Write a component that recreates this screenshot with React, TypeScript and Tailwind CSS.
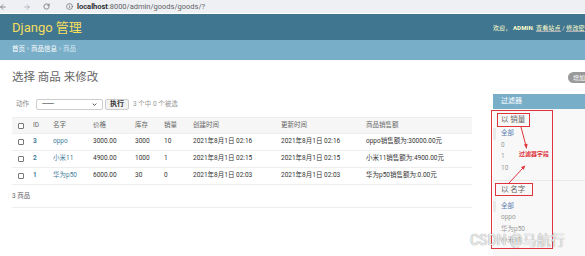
import { ArrowLeft, ArrowRight, Info, RotateCw } from "lucide-react";

const rows = [
  { id: 3, name: "oppo", price: "3000.00", stock: "3000", sales: "10", created: "2021年8月1日 02:16", updated: "2021年8月1日 02:16", total: "oppo销售额为:30000.00元" },
  { id: 2, name: "小米11", price: "4900.00", stock: "1000", sales: "1", created: "2021年8月1日 02:15", updated: "2021年8月1日 02:15", total: "小米11销售额为:4900.00元" },
  { id: 1, name: "华为p50", price: "6000.00", stock: "30", sales: "0", created: "2021年8月1日 02:03", updated: "2021年8月1日 02:03", total: "华为p50销售额为:0.00元" },
];

const cols = "grid grid-cols-[21px_20px_40px_42px_29px_29px_88px_85px_106px] items-center";

function Checkbox() {
  return <span className="ml-[6px] block h-[6px] w-[6px] rounded-[1px] border border-[#777] bg-white" />;
}

export default function App() {
  return (
    <div className="relative flex h-[256px] w-[585px] flex-col overflow-hidden bg-white font-['Roboto','Noto_Sans_CJK_SC',sans-serif] text-[#333]">
      {/* browser chrome */}
      <div className="flex h-[14px] shrink-0 items-center gap-[8px] border-b border-white bg-[#eef0f3] text-[#5f6368]">
        <ArrowLeft className="-ml-[1px] h-[8px] w-[8px]" strokeWidth={2} />
        <ArrowRight className="ml-[8px] h-[8px] w-[8px] text-[#9aa0a6]" strokeWidth={2} />
        <RotateCw className="ml-[4px] h-[7px] w-[7px]" strokeWidth={2.4} />
        <div className="ml-[8px] flex items-center gap-[4px]">
          <Info className="h-[7px] w-[7px]" strokeWidth={2.2} />
          <span className="text-[7.5px] leading-none">
            <span className="font-semibold text-[#202124]">localhost</span>:8000/admin/goods/goods/?
          </span>
        </div>
      </div>

      {/* header */}
      <div className="flex h-[26px] shrink-0 items-center justify-between bg-[#417690] pl-[12px]">
        <span className="text-[13px] leading-none text-[#f5dd5d]">Django 管理</span>
        <div className="w-[92px] overflow-hidden whitespace-nowrap text-[6px] tracking-[0.02em] text-[#ffc]">
          欢迎， <span className="font-bold">ADMIN</span>. <span className="border-b border-[#aab]">查看站点</span> / <span className="border-b border-[#aab]">修改密码</span> / 注销
        </div>
      </div>

      {/* breadcrumbs */}
      <div className="flex h-[20px] shrink-0 items-center bg-[#79aec8] pl-[12px] text-[6.5px] text-white">
        <span>首页</span>
        <span className="mx-[2px] text-[#e4f0f6]">›</span>
        <span>商品信息</span>
        <span className="mx-[2px] text-[#e4f0f6]">›</span>
        <span className="text-[#d8eaf3]">商品</span>
      </div>

      <div className="flex flex-1">
        {/* main */}
        <div className="w-[472px] pl-[12px]">
          <h1 className="pt-[10px] text-[11.5px] leading-[14px] text-[#666]">选择 商品 来修改</h1>

          <div className="mt-[15px] flex h-[11px] items-center text-[6.5px]">
            <span className="ml-[4px] text-[#888]">动作</span>
            <div className="ml-[7px] flex h-[11px] w-[67px] items-center justify-between rounded-[2px] border border-[#ccc] bg-white px-[5px]">
              <span className="tracking-[-0.5px] text-[#333]">---------</span>
              <svg viewBox="0 0 8 5" className="h-[3px] w-[5px]">
                <path d="M1 1l3 3 3-3" fill="none" stroke="#333" strokeWidth="1.4" />
              </svg>
            </div>
            <div className="ml-[2px] flex h-[11px] items-center rounded-[2px] border border-[#ccc] bg-[#f3f3f3] px-[4px] text-[7px] font-bold text-[#333]">
              执行
            </div>
            <span className="ml-[4px] text-[#999]">3 个中 0 个被选</span>
          </div>

          <div className="mt-[7px] text-[6.5px]">
            <div className={`${cols} h-[17px] border-y border-[#eee] bg-[#f6f6f6] text-[#666]`}>
              <Checkbox />
              <span>ID</span>
              <span>名字</span>
              <span>价格</span>
              <span>库存</span>
              <span>销量</span>
              <span>创建时间</span>
              <span>更新时间</span>
              <span>商品销售额</span>
            </div>
            {rows.map((r) => (
              <div key={r.id} className={`${cols} h-[17px] border-b border-[#eee]`}>
                <Checkbox />
                <span className="font-bold text-[#447e9b]">{r.id}</span>
                <span className="text-[#447e9b]">{r.name}</span>
                <span>{r.price}</span>
                <span>{r.stock}</span>
                <span>{r.sales}</span>
                <span className="whitespace-nowrap">{r.created}</span>
                <span className="whitespace-nowrap">{r.updated}</span>
                <span className="whitespace-nowrap">{r.total}</span>
              </div>
            ))}
          </div>

          <div className="border-b border-[#eee] py-[6px] text-[6.5px] leading-[10px] text-[#666]">3 商品</div>
        </div>

        {/* right column */}
        <div className="ml-[21px] flex w-[92px] flex-col">
          <div className="ml-[75px] mt-[12px] flex h-[11px] w-[60px] shrink-0 items-center rounded-full bg-[#999] pl-[5px] text-[6px] text-white">
            增加 商品 +
          </div>
          <div className="mt-[11px] flex flex-1 flex-col bg-[#f8f8f8]">
            <div className="flex h-[15px] items-center bg-[#79aec8] pl-[8px] text-[7px] text-white">过滤器</div>
            <div className="text-[6.5px]">
              <h3 className="mt-[6px] pl-[8px] text-[7.5px] leading-[10px] text-[#666]">以 销量</h3>
              <ul className="mt-[3px] border-b border-[#eaeaea] pb-[6px] leading-[11.5px] text-[#999]">
                <li className="border-l-[3px] border-[#eaeaea] pl-[5px] text-[#5b80b2]">全部</li>
                <li className="pl-[8px]">0</li>
                <li className="pl-[8px]">1</li>
                <li className="pl-[8px]">10</li>
              </ul>
              <h3 className="mt-[4px] pl-[8px] text-[7.5px] leading-[10px] text-[#666]">以 名字</h3>
              <ul className="mt-[6px] leading-[11.3px] text-[#999]">
                <li className="border-l-[3px] border-[#eaeaea] pl-[5px] text-[#5b80b2]">全部</li>
                <li className="pl-[8px]">oppo</li>
                <li className="pl-[8px]">华为p50</li>
                <li className="pl-[8px]">小米11</li>
              </ul>
            </div>
          </div>
        </div>
      </div>

      {/* annotations */}
      <div className="pointer-events-none absolute left-[491px] top-[110px] h-[139px] w-[62px] border-[1.5px] border-[#e0343c]" />
      <div className="pointer-events-none absolute left-[497px] top-[113px] h-[14px] w-[33px] border-[1.5px] border-[#e0343c]" />
      <div className="pointer-events-none absolute left-[495px] top-[183px] h-[13px] w-[38px] border-[1.5px] border-[#e0343c]" />
      <div className="pointer-events-none absolute left-[519px] top-[150px] whitespace-nowrap text-[6px] font-bold leading-[8px] text-[#e0343c]">
        过滤器字段
      </div>
      <svg className="pointer-events-none absolute left-0 top-0" width="585" height="256">
        <line x1="521" y1="127" x2="526" y2="146" stroke="#e0343c" strokeWidth="1" />
        <path d="M524 144.5 L526.6 149 L527.6 143.8 Z" fill="#e0343c" />
        <line x1="509" y1="183" x2="523" y2="168" stroke="#e0343c" strokeWidth="1" />
        <path d="M521 167 L525.5 165.5 L523.6 169.8 Z" fill="#e0343c" />
      </svg>

      {/* watermark */}
      <div className="pointer-events-none absolute left-[470px] top-[231px] whitespace-nowrap text-[14px] leading-[18px] text-white/85 [text-shadow:0_0_1px_#666]">
        CSDN @马航行
      </div>
    </div>
  );
}
